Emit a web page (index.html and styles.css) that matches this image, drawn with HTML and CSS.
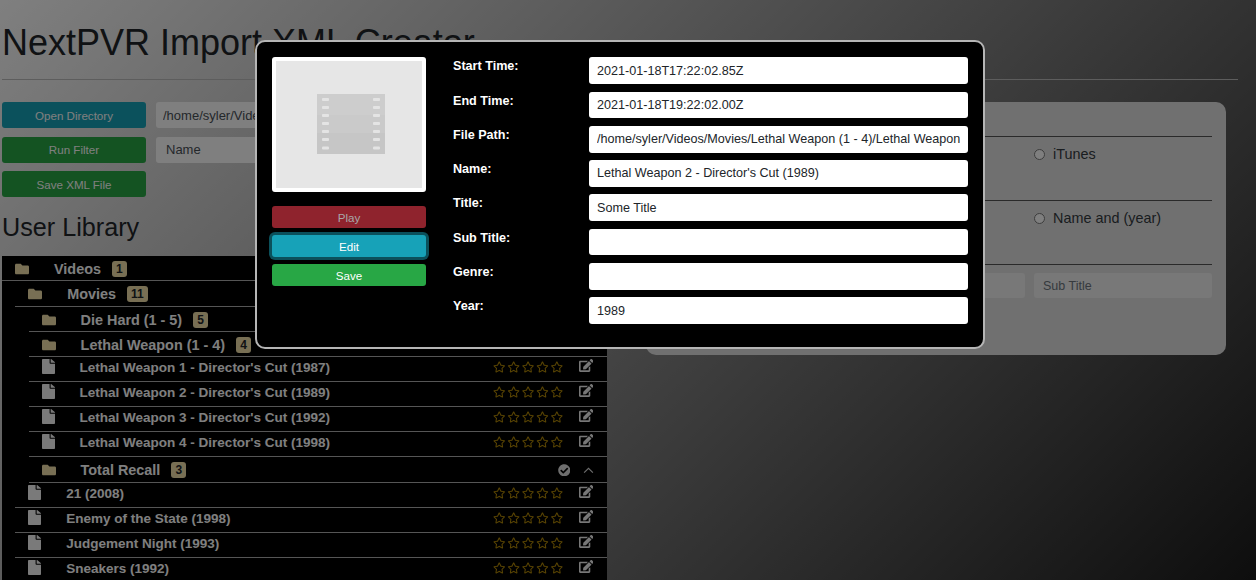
FILE: index.html
```html
<!DOCTYPE html>
<html>
<head>
<meta charset="UTF-8">
<title>NextPVR Import XML Creator</title>
<link rel="stylesheet" href="styles.css">
</head>
<body>

<svg class="icon-defs" xmlns="http://www.w3.org/2000/svg">
  <symbol id="i-folder" viewBox="0 0 512 512"><path d="M464 128H272l-64-64H48C21.49 64 0 85.49 0 112v288c0 26.51 21.49 48 48 48h416c26.51 0 48-21.49 48-48V176c0-26.51-21.49-48-48-48z"/></symbol>
  <symbol id="i-file" viewBox="0 0 384 512" preserveAspectRatio="none"><path d="M224 136V0H24C10.7 0 0 10.7 0 24v464c0 13.3 10.7 24 24 24h336c13.3 0 24-10.7 24-24V160H248c-13.2 0-24-10.8-24-24zm160-14.1v6.1H256V0h6.1c6.4 0 12.5 2.5 17 7l97.9 98c4.5 4.5 7 10.6 7 16.9z"/></symbol>
  <symbol id="i-star" viewBox="0 0 576 512"><path d="M528.1 171.5L382 150.2 316.7 17.8c-11.7-23.6-45.6-23.9-57.4 0L194 150.2 47.9 171.5c-26.2 3.8-36.7 36.1-17.7 54.6l105.7 103-25 145.5c-4.5 26.3 23.2 46 46.4 33.7L288 439.6l130.7 68.7c23.2 12.2 50.9-7.4 46.4-33.7l-25-145.5 105.7-103c19-18.5 8.5-50.8-17.7-54.6zM388.6 312.3l23.7 138.4L288 385.4l-124.3 65.3 23.7-138.4-100.6-98 139-20.2 62.2-126 62.2 126 139 20.2-100.6 98z"/></symbol>
  <symbol id="i-edit" viewBox="0 0 576 512"><path d="M402.6 83.2l90.2 90.2c3.8 3.8 3.8 10 0 13.8L274.4 405.6l-92.8 10.3c-12.4 1.4-22.9-9.1-21.5-21.5l10.3-92.8L388.8 83.2c3.8-3.8 10-3.8 13.8 0zm162-22.9l-48.8-48.8c-15.2-15.2-39.9-15.2-55.2 0l-35.4 35.4c-3.8 3.8-3.8 10 0 13.8l90.2 90.2c3.8 3.8 10 3.8 13.8 0l35.4-35.4c15.2-15.3 15.2-40 0-55.2zM384 346.2V448H64V128h229.8c3.2 0 6.2-1.3 8.5-3.5l40-40c7.6-7.6 2.2-20.5-8.5-20.5H48C21.5 64 0 85.5 0 112v352c0 26.5 21.5 48 48 48h352c26.5 0 48-21.5 48-48V306.2c0-10.7-12.9-16-20.5-8.5l-40 40c-2.2 2.3-3.5 5.3-3.5 8.5z"/></symbol>
  <symbol id="i-check" viewBox="0 0 512 512"><path d="M504 256c0 136.967-111.033 248-248 248S8 392.967 8 256 119.033 8 256 8s248 111.033 248 248zM227.314 387.314l184-184c6.248-6.248 6.248-16.379 0-22.627l-22.627-22.627c-6.248-6.249-16.379-6.249-22.628 0L216 308.118l-70.059-70.059c-6.248-6.248-16.379-6.248-22.628 0l-22.627 22.627c-6.248 6.248-6.248 16.379 0 22.627l104 104c6.249 6.249 16.379 6.249 22.628 0z"/></symbol>
  <symbol id="i-up" viewBox="0 0 12 8"><path d="M1 6.5 L6 1.5 L11 6.5" fill="none" stroke="currentColor" stroke-width="1.3"/></symbol>
  <symbol id="i-stars" viewBox="0 0 70 12">
    <use href="#i-star" x="0" width="12.5" height="12"/>
    <use href="#i-star" x="14.4" width="12.5" height="12"/>
    <use href="#i-star" x="28.8" width="12.5" height="12"/>
    <use href="#i-star" x="43.2" width="12.5" height="12"/>
    <use href="#i-star" x="57.6" width="12.5" height="12"/>
  </symbol>
</svg>

<h1 class="page-title">NextPVR Import XML Creator</h1>
<hr class="page-rule">

<div class="page-body">
  <div class="left-col">
    <div class="tools">
      <button class="btn btn-info">Open Directory</button>
      <input class="tool-input" type="text" value="/home/syler/Videos/Movies">
      <button class="btn btn-success">Run Filter</button>
      <input class="tool-input tool-select" type="text" value="Name">
      <button class="btn btn-success">Save XML File</button>
    </div>

    <h2 class="lib-title">User Library</h2>

    <div class="tree">
      <div class="row"><svg class="ic-folder"><use href="#i-folder"/></svg><span class="folder-name">Videos</span><span class="badge">1</span>
        <span class="row-end"><svg class="ic-check"><use href="#i-check"/></svg><svg class="ic-up"><use href="#i-up"/></svg></span></div>
      <div class="branch">
        <div class="row row-tall"><svg class="ic-folder"><use href="#i-folder"/></svg><span class="folder-name">Movies</span><span class="badge">11</span>
          <span class="row-end"><svg class="ic-check"><use href="#i-check"/></svg><svg class="ic-up"><use href="#i-up"/></svg></span></div>
        <div class="branch">
          <div class="row"><svg class="ic-folder"><use href="#i-folder"/></svg><span class="folder-name">Die Hard (1 - 5)</span><span class="badge">5</span></div>
          <div class="row"><svg class="ic-folder"><use href="#i-folder"/></svg><span class="folder-name">Lethal Weapon (1 - 4)</span><span class="badge">4</span></div>
          <div class="row file-row"><svg class="ic-file"><use href="#i-file"/></svg><span class="file-name">Lethal Weapon 1 - Director's Cut (1987)</span>
            <span class="row-end"><svg class="ic-stars"><use href="#i-stars"/></svg><svg class="ic-edit"><use href="#i-edit"/></svg></span></div>
          <div class="row file-row"><svg class="ic-file"><use href="#i-file"/></svg><span class="file-name">Lethal Weapon 2 - Director's Cut (1989)</span>
            <span class="row-end"><svg class="ic-stars"><use href="#i-stars"/></svg><svg class="ic-edit"><use href="#i-edit"/></svg></span></div>
          <div class="row file-row"><svg class="ic-file"><use href="#i-file"/></svg><span class="file-name">Lethal Weapon 3 - Director's Cut (1992)</span>
            <span class="row-end"><svg class="ic-stars"><use href="#i-stars"/></svg><svg class="ic-edit"><use href="#i-edit"/></svg></span></div>
          <div class="row file-row"><svg class="ic-file"><use href="#i-file"/></svg><span class="file-name">Lethal Weapon 4 - Director's Cut (1998)</span>
            <span class="row-end"><svg class="ic-stars"><use href="#i-stars"/></svg><svg class="ic-edit"><use href="#i-edit"/></svg></span></div>
          <div class="row row-tall"><svg class="ic-folder"><use href="#i-folder"/></svg><span class="folder-name">Total Recall</span><span class="badge">3</span>
            <span class="row-end"><svg class="ic-check"><use href="#i-check"/></svg><svg class="ic-up"><use href="#i-up"/></svg></span></div>
        </div>
        <div class="row file-row"><svg class="ic-file"><use href="#i-file"/></svg><span class="file-name">21 (2008)</span>
          <span class="row-end"><svg class="ic-stars"><use href="#i-stars"/></svg><svg class="ic-edit"><use href="#i-edit"/></svg></span></div>
        <div class="row file-row"><svg class="ic-file"><use href="#i-file"/></svg><span class="file-name">Enemy of the State (1998)</span>
          <span class="row-end"><svg class="ic-stars"><use href="#i-stars"/></svg><svg class="ic-edit"><use href="#i-edit"/></svg></span></div>
        <div class="row file-row"><svg class="ic-file"><use href="#i-file"/></svg><span class="file-name">Judgement Night (1993)</span>
          <span class="row-end"><svg class="ic-stars"><use href="#i-stars"/></svg><svg class="ic-edit"><use href="#i-edit"/></svg></span></div>
        <div class="row file-row"><svg class="ic-file"><use href="#i-file"/></svg><span class="file-name">Sneakers (1992)</span>
          <span class="row-end"><svg class="ic-stars"><use href="#i-stars"/></svg><svg class="ic-edit"><use href="#i-edit"/></svg></span></div>
      </div>
    </div>
  </div>

  <div class="filter-card">
    <div class="card-sec card-head"></div>
    <div class="card-sec">
      <label class="opt"><input type="radio" name="fmt"> iTunes</label>
    </div>
    <div class="card-sec">
      <label class="opt"><input type="radio" name="nm"> Name and (year)</label>
    </div>
    <div class="card-sec card-inputs">
      <input class="card-input card-input-2" type="text">
      <input class="card-input" type="text" placeholder="Sub Title">
    </div>
  </div>
</div>

<div class="overlay"></div>

<div class="modal">
  <div class="modal-side">
    <div class="poster">
      <svg class="film" viewBox="0 0 68 60">
        <rect width="68" height="21" fill="#cdcdcd"/>
        <rect y="21" width="68" height="18" fill="#cacaca"/>
        <rect y="39" width="68" height="21" fill="#c6c6c6"/>
        <g fill="#e4e4e4">
          <rect x="5" y="4" width="7" height="3" rx="1"/><rect x="5" y="12" width="7" height="3" rx="1"/><rect x="5" y="20" width="7" height="3" rx="1"/><rect x="5" y="28" width="7" height="3" rx="1"/><rect x="5" y="36" width="7" height="3" rx="1"/><rect x="5" y="44" width="7" height="3" rx="1"/><rect x="5" y="52.5" width="7" height="3" rx="1"/>
          <rect x="56" y="4" width="7" height="3" rx="1"/><rect x="56" y="12" width="7" height="3" rx="1"/><rect x="56" y="20" width="7" height="3" rx="1"/><rect x="56" y="28" width="7" height="3" rx="1"/><rect x="56" y="36" width="7" height="3" rx="1"/><rect x="56" y="44" width="7" height="3" rx="1"/><rect x="56" y="52.5" width="7" height="3" rx="1"/>
        </g>
      </svg>
    </div>
    <button class="mbtn mbtn-play">Play</button>
    <button class="mbtn mbtn-edit">Edit</button>
    <button class="mbtn mbtn-save">Save</button>
  </div>
  <div class="modal-form">
    <label class="m-label">Start Time:</label><input class="m-input" type="text" value="2021-01-18T17:22:02.85Z">
    <label class="m-label">End Time:</label><input class="m-input" type="text" value="2021-01-18T19:22:02.00Z">
    <label class="m-label">File Path:</label><input class="m-input" type="text" value="/home/syler/Videos/Movies/Lethal Weapon (1 - 4)/Lethal Weapon 2 - Director's Cut (1989).mkv">
    <label class="m-label">Name:</label><input class="m-input" type="text" value="Lethal Weapon 2 - Director's Cut (1989)">
    <label class="m-label">Title:</label><input class="m-input" type="text" value="Some Title">
    <label class="m-label">Sub Title:</label><input class="m-input" type="text">
    <label class="m-label">Genre:</label><input class="m-input" type="text">
    <label class="m-label">Year:</label><input class="m-input" type="text" value="1989">
  </div>
</div>

</body>
</html>
```

FILE: styles.css
```css
html, body {
  height: 100%;
}
body {
  margin: 0;
  overflow: hidden;
  font-family: "Liberation Sans", Arial, sans-serif;
  color: #212529;
  background: linear-gradient(135deg, #fff, #1c1c1c);
}
.icon-defs {
  display: none;
}

.page-title {
  margin: 0;
  padding: 19px 0 0 2px;
  font-size: 36px;
  font-weight: 400;
  line-height: 48px;
}
.page-rule {
  margin: 12px 18px 0 2px;
  border: 0;
  border-top: 1px solid #bbb;
}

.page-body {
  display: flex;
  padding: 22px 0 0 2px;
}
.left-col {
  width: 605px;
  flex: none;
}

.tools {
  display: grid;
  grid-template-columns: 144px 1fr;
  column-gap: 10px;
  row-gap: 8.5px;
}
.btn {
  height: 26px;
  border: 0;
  border-radius: 3px;
  color: #fff;
  font: 11.6px "Liberation Sans", Arial, sans-serif;
  padding: 0;
}
.btn-info {
  background: #17a2b8;
}
.btn-success {
  background: #28a745;
}
.tools .btn-success:last-child {
  grid-column: 1;
}
.tool-input {
  height: 26px;
  box-sizing: border-box;
  border: 0;
  border-radius: 3px;
  padding: 0 7px;
  background: #fff;
  color: #495057;
  font: 13px "Liberation Sans", Arial, sans-serif;
}
.tool-select {
  padding-left: 10px;
}

.lib-title {
  margin: 15px 0 13px;
  font-size: 25.2px;
  font-weight: 400;
  line-height: 31px;
}

.tree {
  background: #000;
  color: #fff;
  font-weight: 700;
}
.branch {
  margin-left: 13.3px;
}
.row {
  display: flex;
  align-items: center;
  box-sizing: border-box;
  height: 25px;
  border-bottom: 1px solid #aaa;
  padding: 1px 0 0 13px;
}
.file-row {
  padding-top: 0;
}
.row-tall {
  height: 26px;
}
.ic-folder {
  width: 14px;
  height: 14px;
  fill: #f0dfa8;
  flex: none;
}
.folder-name {
  margin-left: 25px;
  font-size: 14.4px;
}
.badge {
  margin-left: 11px;
  padding: 0 4px;
  min-width: 7px;
  height: 16px;
  line-height: 16px;
  border-radius: 3px;
  background: #f0dfa8;
  color: #212529;
  font-size: 12px;
  text-align: center;
}
.ic-file {
  width: 13px;
  height: 15px;
  fill: #f4f4f4;
  flex: none;
  margin-bottom: 5px;
}
.file-name {
  margin-left: 25px;
  font-size: 13.5px;
  padding-bottom: 4px;
}
.row-end {
  margin-left: auto;
  display: flex;
  align-items: center;
  padding-right: 13px;
}
.ic-stars {
  width: 70px;
  height: 12px;
  fill: #b08706;
  margin-bottom: 5px;
}
.ic-edit {
  width: 14.5px;
  height: 13px;
  fill: #eee;
  margin: 0 1px 8px 16px;
}
.ic-check {
  width: 12.5px;
  height: 12.5px;
  fill: #ddd;
}
.ic-up {
  width: 11px;
  height: 7px;
  color: #ddd;
  margin-left: 13px;
}

.filter-card {
  box-sizing: border-box;
  width: 580px;
  height: 253px;
  margin-left: 39px;
  padding: 0 14px;
  border-radius: 10px;
  background: #e1e1e1;
}
.card-sec {
  box-sizing: border-box;
  height: 64px;
  border-bottom: 1px solid #555;
  display: grid;
  grid-template-columns: 178px 178px 178px;
  column-gap: 9px;
  align-content: start;
  padding-top: 8px;
}
.card-head {
  height: 35px;
}
.card-sec:last-child {
  border-bottom: 0;
}
.opt {
  grid-column: 3;
  display: flex;
  align-items: center;
  font-size: 14.4px;
  color: #343a40;
  padding-top: 1px;
}
.opt input {
  margin: 0 8px 0 0;
  width: 11px;
  height: 11px;
}
.card-input {
  grid-column: 3;
  box-sizing: border-box;
  height: 25px;
  border: 0;
  border-radius: 3px;
  padding: 0 9px;
  background: #f0f0f0;
  font: 12.5px "Liberation Sans", Arial, sans-serif;
}
.card-input-2 {
  grid-column: 2;
}
.card-input::placeholder {
  color: #6c757d;
}

.overlay {
  position: fixed;
  inset: 0;
  background: rgba(0, 0, 0, 0.5);
}

.modal {
  position: fixed;
  left: 255px;
  top: 40px;
  box-sizing: border-box;
  width: 730px;
  height: 309px;
  display: flex;
  padding: 15px;
  border: 2px solid #b5b5b5;
  border-radius: 10px;
  background: #000;
  color: #fff;
}
.modal-side {
  width: 154px;
  flex: none;
  display: flex;
  flex-direction: column;
}
.poster {
  box-sizing: border-box;
  height: 135px;
  margin-bottom: 14px;
  border: 4.5px solid #fff;
  border-radius: 3px;
  background: #e6e6e6;
  display: flex;
  align-items: center;
  justify-content: center;
}
.film {
  width: 68px;
  height: 60px;
  filter: blur(0.5px);
  margin-bottom: 2px;
  margin-left: 3px;
}
.mbtn {
  height: 22px;
  margin-bottom: 7px;
  padding: 0;
  border: 0;
  border-radius: 3px;
  color: #fff;
  font: 11.6px "Liberation Sans", Arial, sans-serif;
}
.mbtn-play {
  background: #8f232d;
  color: #a8a8a8;
}
.mbtn-edit {
  background: #17a2b8;
  box-shadow: 0 0 0 3px #0b505b;
}
.mbtn-save {
  background: #28a745;
}

.modal-form {
  margin-left: 27px;
  padding-top: 0.3px;
  flex: 1;
  display: grid;
  grid-template-columns: 136px 379px;
  grid-auto-rows: 26.7px;
  row-gap: 7.6px;
}
.m-label {
  font-size: 12.6px;
  font-weight: 700;
  line-height: 18px;
}
.m-input {
  box-sizing: border-box;
  height: 26.7px;
  width: 379px;
  border: 0;
  border-radius: 3px;
  padding: 0 8px;
  background: #fff;
  color: #212529;
  font: 12.6px "Liberation Sans", Arial, sans-serif;
}
```
